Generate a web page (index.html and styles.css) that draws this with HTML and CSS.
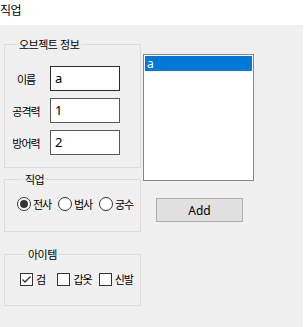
FILE: index.html
```html
<!DOCTYPE html>
<html lang="ko">
<head>
    <meta charset="UTF-8">
    <title>직업</title>
    <link rel="stylesheet" href="styles.css">
</head>
<body>
    <div class="titlebar">직업</div>

    <div class="content">
        <div class="left-col">
            <fieldset class="group group-info">
                <legend>오브젝트 정보</legend>
                <div class="field-row">
                    <span class="field-label">이름</span>
                    <div class="textbox focused">a</div>
                </div>
                <div class="field-row">
                    <span class="field-label">공격력</span>
                    <div class="textbox">1</div>
                </div>
                <div class="field-row">
                    <span class="field-label">방어력</span>
                    <div class="textbox">2</div>
                </div>
            </fieldset>

            <fieldset class="group group-job">
                <legend>직업</legend>
                <div class="option-row">
                    <label class="option"><span class="radio checked"></span>전사</label>
                    <label class="option"><span class="radio"></span>법사</label>
                    <label class="option"><span class="radio"></span>궁수</label>
                </div>
            </fieldset>

            <fieldset class="group group-item">
                <legend>아이템</legend>
                <div class="option-row">
                    <label class="check-option">
                        <span class="checkbox">
                            <svg width="11" height="11" viewBox="0 0 11 11"><polyline points="1.5,5.5 4,8 9.5,2.5" fill="none" stroke="#333" stroke-width="1.3"/></svg>
                        </span>검
                    </label>
                    <label class="check-option"><span class="checkbox"></span>갑옷</label>
                    <label class="check-option"><span class="checkbox"></span>신발</label>
                </div>
            </fieldset>
        </div>

        <div class="right-col">
            <div class="listbox">
                <div class="list-item selected">a</div>
            </div>
            <button class="btn">Add</button>
        </div>
    </div>
</body>
</html>
```

FILE: styles.css
```css
body {
    margin: 0;
    width: 303px;
    height: 327px;
    background: #f0f0f0;
    font-family: 'Segoe UI', 'Noto Sans', 'Noto Sans CJK KR', sans-serif;
    font-size: 12px;
    color: #000;
    border-right: 1px solid #fff;
}
.titlebar {
    height: 25px;
    box-sizing: border-box;
    background: #fff;
    padding-top: 2px;
    line-height: 15px;
    font-family: 'Noto Sans CJK KR', sans-serif;
    font-size: 12px;
    letter-spacing: -0.5px;
}
.content {
    display: flex;
}
.left-col {
    margin-left: 4px;
    margin-top: 12px;
    width: 137px;
}
.group {
    box-sizing: border-box;
    width: 137px;
    margin: 0;
    padding: 0;
    border: 1px solid #dcdcdc;
    min-inline-size: 0;
}
.group legend {
    margin-left: 6px;
    padding: 0 2px;
    line-height: 14px;
    font-family: 'Noto Sans CJK KR', sans-serif;
    font-size: 11px;
    letter-spacing: -0.5px;
}
.group-info {
    height: 131px;
    padding: 15px 0 0 6px;
}
.group-job {
    height: 60px;
    margin-top: 4px;
    padding: 10px 0 0 12px;
}
.group-item {
    height: 59px;
    margin-top: 15px;
    padding: 10px 0 0 15px;
}
.field-row {
    display: flex;
    align-items: center;
    margin-bottom: 7px;
}
.field-label {
    width: 30px;
    margin-right: 9px;
    text-align: center;
    font-family: 'Noto Sans CJK KR', sans-serif;
    font-size: 11px;
    letter-spacing: -1px;
}
.textbox {
    box-sizing: border-box;
    width: 70px;
    height: 25px;
    padding-left: 4px;
    line-height: 23px;
    background: #fff;
    border: 1px solid #5a5a5a;
    font-size: 13px;
}
.textbox.focused {
    border-color: #2b2b2b;
}
.option-row {
    display: flex;
    align-items: center;
    height: 16px;
}
.option, .check-option {
    display: flex;
    align-items: center;
    font-family: 'Noto Sans CJK KR', sans-serif;
    font-size: 11px;
    letter-spacing: -1px;
}
.option {
    width: 42px;
}
.check-option {
    width: 43px;
}
.check-option:first-child {
    width: 39px;
}
.radio {
    box-sizing: border-box;
    width: 14px;
    height: 14px;
    margin-right: 2px;
    border: 1px solid #333;
    border-radius: 50%;
    background: #fff;
    display: flex;
    align-items: center;
    justify-content: center;
}
.radio.checked::after {
    content: '';
    width: 8px;
    height: 8px;
    border-radius: 50%;
    background: #333;
}
.checkbox {
    box-sizing: border-box;
    width: 13px;
    height: 13px;
    margin-right: 3px;
    border: 1px solid #333;
    background: #fff;
    display: flex;
    align-items: center;
    justify-content: center;
}
.right-col {
    margin-left: 2px;
    margin-top: 29px;
}
.listbox {
    box-sizing: border-box;
    width: 111px;
    height: 127px;
    padding: 1px;
    background: #fff;
    border: 1px solid #828790;
}
.list-item {
    height: 15px;
    line-height: 15px;
    padding-left: 2px;
    font-size: 12px;
}
.list-item.selected {
    background: #0078d7;
    color: #fff;
}
.btn {
    display: block;
    box-sizing: border-box;
    width: 87px;
    height: 24px;
    margin: 17px 0 0 13px;
    padding: 0;
    background: #e1e1e1;
    border: 1px solid #adadad;
    font-family: 'Segoe UI', 'Noto Sans', sans-serif;
    font-size: 12px;
    color: #000;
}
```
